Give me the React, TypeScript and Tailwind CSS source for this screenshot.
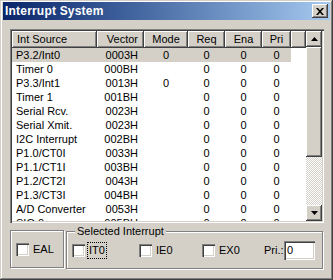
import React from 'react';

const cols = [85, 47, 44, 37, 37, 29];

const rows: [string, string, string][] = [
  ['P3.2/Int0', '0003H', '0'],
  ['Timer 0', '000BH', ''],
  ['P3.3/Int1', '0013H', '0'],
  ['Timer 1', '001BH', ''],
  ['Serial Rcv.', '0023H', ''],
  ['Serial Xmit.', '0023H', ''],
  ['I2C Interrupt', '002BH', ''],
  ['P1.0/CT0I', '0033H', ''],
  ['P1.1/CT1I', '003BH', ''],
  ['P1.2/CT2I', '0043H', ''],
  ['P1.3/CT3I', '004BH', ''],
  ['A/D Converter', '0053H', ''],
  ['SIO 0', '005BH', ''],
];

const raised =
  'bg-[#d4d0c8] shadow-[inset_-1px_-1px_#404040,inset_1px_1px_#fff,inset_-2px_-2px_#808080]';
const sunken =
  'shadow-[inset_1px_1px_#808080,inset_2px_2px_#404040,inset_-1px_-1px_#fff,inset_-2px_-2px_#d4d0c8]';

function Arrow({ down }: { down?: boolean }) {
  return (
    <svg width="7" height="4" viewBox="0 0 7 4">
      {down ? <path d="M0 0h7L3.5 4z" fill="#000" /> : <path d="M0 4h7L3.5 0z" fill="#000" />}
    </svg>
  );
}

function Check({ label, focus }: { label: string; focus?: boolean }) {
  return (
    <div className="flex items-center">
      <div className={`w-[13px] h-[13px] bg-white ${sunken}`} />
      <span className={`ml-[3px] px-[1px] leading-[15px] ${focus ? 'outline-1 outline-dotted outline-black' : ''}`}>
        {label}
      </span>
    </div>
  );
}

export default function App() {
  return (
    <div
      className="w-[333px] h-[280px] bg-[#d4d0c8] pt-[2px] px-[3px] flex flex-col text-[11px] text-black shadow-[inset_-1px_-1px_#404040,inset_1px_1px_#d4d0c8,inset_-2px_-2px_#808080,inset_2px_2px_#fff]"
      style={{ fontFamily: '"Liberation Sans", Arial, sans-serif' }}
    >
      {/* Title bar */}
      <div className="h-[18px] flex items-center justify-between bg-linear-to-r from-[#0a246a] to-[#a6caf0] pl-[2px] pr-[2px]">
        <span className="text-white font-bold text-[12px] tracking-[0.2px]">Interrupt System</span>
        <div className={`w-[16px] h-[14px] flex items-center justify-center ${raised}`}>
          <svg width="8" height="7" viewBox="0 0 8 7">
            <path d="M0 0h2l2 2.3L6 0h2L5 3.5 8 7H6L4 4.7 2 7H0l3-3.5z" fill="#000" />
          </svg>
        </div>
      </div>

      <div className="px-[7px] pt-[9px] flex flex-col">
        {/* List */}
        <div className={`w-[314px] h-[194px] bg-white p-[2px] flex ${sunken}`}>
          <div className="flex-1 flex flex-col overflow-hidden">
            <div className="flex h-[17px] shrink-0">
              {['Int Source', 'Vector', 'Mode', 'Req', 'Ena', 'Pri'].map((h, i) => (
                <div
                  key={h}
                  style={{ width: cols[i] }}
                  className={`h-full flex items-center ${raised} ${
                    i === 0 ? 'pl-[5px]' : i === 1 ? 'justify-end pr-[6px]' : 'justify-center'
                  }`}
                >
                  {h}
                </div>
              ))}
              <div className={`flex-1 h-full ${raised}`} />
            </div>
            {rows.map((r, ri) => (
              <div key={ri} className="flex h-[14px] shrink-0 leading-[14px]">
                <div className={`flex ${ri === 0 ? 'bg-[#d4d0c8]' : ''}`}>
                  <div style={{ width: cols[0] }} className="pl-[4px] whitespace-nowrap">{r[0]}</div>
                  <div style={{ width: cols[1] }} className="text-right pr-[6px]">{r[1]}</div>
                  <div style={{ width: cols[2] }} className="text-center">{r[2]}</div>
                  <div style={{ width: cols[3] }} className="text-center">0</div>
                  <div style={{ width: cols[4] }} className="text-center">0</div>
                  <div style={{ width: cols[5] }} className="text-center">0</div>
                </div>
              </div>
            ))}
          </div>
          {/* Scrollbar */}
          <div className="w-[16px] flex flex-col">
            <div className={`h-[16px] flex items-center justify-center ${raised}`}>
              <Arrow />
            </div>
            <div className={`h-[110px] ${raised}`} />
            <div className="flex-1 bg-[repeating-conic-gradient(#fff_0_25%,#d4d0c8_0_50%)] bg-size-[2px_2px]" />
            <div className={`h-[16px] flex items-center justify-center ${raised}`}>
              <Arrow down />
            </div>
          </div>
        </div>

        {/* Bottom groups */}
        <div className="flex mt-[7px] h-[38px]">
          <div className="w-[54px] h-full border border-[#808080] shadow-[inset_1px_1px_#fff,1px_1px_#fff] flex items-center pl-[5px]">
            <Check label="EAL" />
          </div>
          <div className="relative ml-[2px] w-[257px] h-full mt-[1px] border border-[#808080] shadow-[inset_1px_1px_#fff,1px_1px_#fff] flex items-center pl-[5px]">
            <span className="absolute left-[8px] -top-[7px] px-[2px] bg-[#d4d0c8] leading-[13px]">Selected Interrupt</span>
            <div className="w-[67px]">
              <Check label="IT0" focus />
            </div>
            <div className="w-[63px]">
              <Check label="IE0" />
            </div>
            <div className="w-[62px]">
              <Check label="EX0" />
            </div>
            <span className="w-[19px] whitespace-nowrap">Pri.:</span>
            <div className={`ml-[1px] w-[31px] h-[19px] bg-white pl-[3px] flex items-center ${sunken}`}>0</div>
          </div>
        </div>
      </div>
    </div>
  );
}
